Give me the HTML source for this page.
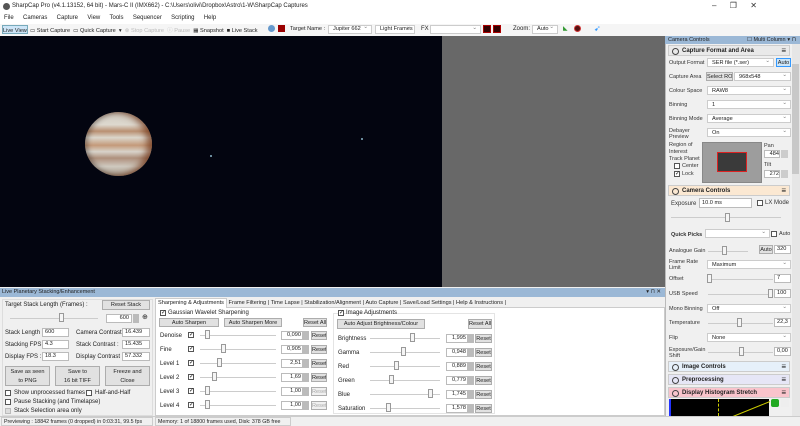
<!DOCTYPE html>
<html><head><meta charset="utf-8"><style>
*{box-sizing:border-box;margin:0;padding:0}
body{width:800px;height:426px;overflow:hidden;position:relative;background:#f0f0f0;font-family:"Liberation Sans",sans-serif;font-size:6px;color:#222}
.a{position:absolute;white-space:nowrap}
.btn{position:absolute;background:#e1e1e1;border:1px solid #adadad;text-align:center;font-size:5.6px;line-height:8px;white-space:nowrap;overflow:hidden}
.inp{position:absolute;background:#fff;border:1px solid #bbb;font-size:5.6px;line-height:7px;padding-left:2px;white-space:nowrap;overflow:hidden}
.dd{position:absolute;background:#fff;border:1px solid #ccc;font-size:5.6px;line-height:8px;padding-left:4px;white-space:nowrap;overflow:hidden}
.dd:after{content:"⌄";position:absolute;right:3px;top:-2px;color:#777}
.cb{position:absolute;width:6px;height:6px;border:1px solid #555;background:#fff;font-size:6px;line-height:5px;text-align:center}
.trk{position:absolute;height:1px;background:#ccc}
.th{position:absolute;width:5px;height:9px;background:#f5f5f5;border:1px solid #999}
.hd{position:absolute;left:668px;width:122px;height:11px;border:1px solid #ccc;font-weight:bold;font-size:6px;line-height:10px;padding-left:13px}
.hd:before{content:"";position:absolute;left:3px;top:2px;width:5px;height:5px;border:1px solid #444;border-radius:50%}
.hd:after{content:"≡";position:absolute;right:3px;top:0;font-size:8px;font-weight:normal}
.lbl{position:absolute;left:669px;font-size:5.5px;color:#333;white-space:nowrap}
</style></head><body>
<div class="a" style="left:0;top:0;width:800px;height:13px;background:#fff"></div>
<div class="a" style="left:3px;top:3px;width:7px;height:7px;border-radius:50%;background:#555"></div>
<div class="a" style="left:12px;top:3px;font-size:6px">SharpCap Pro (v4.1.13152, 64 bit) - Mars-C II (IMX662) - C:\Users\olivi\Dropbox\Astro\1-W\SharpCap Captures</div>
<div class="a" style="left:712px;top:1px;font-size:8px;color:#333">–&nbsp;&nbsp;&nbsp;&nbsp;&nbsp;&nbsp;❐&nbsp;&nbsp;&nbsp;&nbsp;&nbsp;&nbsp;✕</div>
<div class="a" style="left:0;top:13px;width:800px;height:11px;background:#fff"></div>
<div class="a" style="left:4px;top:15px;word-spacing:3px">File&nbsp; Cameras&nbsp; Capture&nbsp; View&nbsp; Tools&nbsp; Sequencer&nbsp; Scripting&nbsp; Help</div>
<div class="a" style="left:0;top:24px;width:800px;height:12px;background:#f5f5f5"></div>
<div class="a" style="left:2px;top:25px;width:26px;height:9px;background:#cde5f7;border:1px solid #7ab"></div>
<div class="a" style="left:3px;top:26px;font-size:5.6px">Live View&nbsp; ▭ Start Capture&nbsp; ▭ Quick Capture&nbsp; ▾&nbsp; <span style="color:#bbb">⊗ Stop Capture&nbsp; ⓘ Pause</span>&nbsp; ▦ Snapshot&nbsp; ■ Live Stack</div>
<div class="a" style="left:268px;top:25px;width:7px;height:7px;background:#69c;border-radius:50%"></div>
<div class="a" style="left:278px;top:25px;width:7px;height:7px;background:#900"></div>
<div class="a" style="left:290px;top:26px;font-size:5.6px">Target Name :</div>
<div class="dd" style="left:328px;top:25px;width:44px;height:9px;line-height:7px">Jupiter 662</div>
<div class="dd" style="left:375px;top:25px;width:40px;height:9px;line-height:7px">Light Frames</div>
<div class="a" style="left:421px;top:26px">FX</div>
<div class="dd" style="left:430px;top:25px;width:51px;height:9px"></div>
<div class="a" style="left:483px;top:25px;width:8px;height:8px;background:#300;border:1px solid #a00"></div>
<div class="a" style="left:493px;top:25px;width:8px;height:8px;background:#300;border:1px solid #a00"></div>
<div class="a" style="left:513px;top:26px">Zoom:</div>
<div class="dd" style="left:532px;top:25px;width:26px;height:9px;line-height:7px">Auto</div>
<div class="a" style="left:563px;top:25px;color:#393">◣</div>
<div class="a" style="left:574px;top:25px;width:7px;height:7px;border-radius:50%;background:#511;border:1px solid #c33"></div>
<div class="a" style="left:594px;top:24px;color:#39f;font-size:8px">➹</div>
<div class="a" style="left:0;top:36px;width:442px;height:251px;background:#030510"></div>
<div class="a" style="left:442px;top:36px;width:223px;height:251px;background:#686868"></div>
<div class="a" style="left:85px;top:112px;width:67px;height:64px;border-radius:50%;background:linear-gradient(180deg,#cfcac0 0%,#ddd8ce 20%,#b99072 30%,#dbd6cc 40%,#c49a7a 52%,#d8d3ca 62%,#ae907c 72%,#cfc9bf 85%,#a89c8c 100%);box-shadow:inset -5px 0 7px rgba(110,50,20,.7),inset 3px 0 5px rgba(0,0,0,.3)"></div>
<div class="a" style="left:210px;top:155px;width:2px;height:2px;background:#6a8a9b"></div>
<div class="a" style="left:361px;top:138px;width:2px;height:2px;background:#6a8a9b"></div>
<div class="a" style="left:665px;top:36px;width:135px;height:380px;background:#f0f0f0;border-left:1px solid #bbb"></div>
<div class="a" style="left:665px;top:36px;width:135px;height:8px;background:#9bb8d6;font-size:5.5px;line-height:8px;padding-left:3px">Camera Controls<span style="position:absolute;left:82px">☐ Multi Column</span><span style="position:absolute;right:4px">▾ ⊓</span></div>
<div class="a" style="left:792px;top:44px;width:8px;height:372px;background:#e6e6e6"></div>
<div class="a" style="left:792px;top:64px;width:7px;height:110px;background:#c8c8c8"></div>
<div class="hd" style="top:45px;background:#e9e9e9">Capture Format and Area</div>
<div class="lbl" style="top:60px">Output Format</div><div class="dd" style="left:707px;top:58px;width:67px;height:9px">SER file (*.ser)</div><div class="btn" style="left:776px;top:58px;width:15px;height:9px;background:#cde5f7;border-color:#39f">Auto</div>
<div class="lbl" style="top:74px">Capture Area</div><div class="btn" style="left:706px;top:72px;width:27px;height:9px">Select ROI</div><div class="dd" style="left:734px;top:72px;width:57px;height:9px">968x548</div>
<div class="lbl" style="top:88px">Colour Space</div><div class="dd" style="left:707px;top:86px;width:84px;height:9px">RAW8</div>
<div class="lbl" style="top:102px">Binning</div><div class="dd" style="left:707px;top:100px;width:84px;height:9px">1</div>
<div class="lbl" style="top:116px">Binning Mode</div><div class="dd" style="left:707px;top:114px;width:84px;height:9px">Average</div>
<div class="lbl" style="top:128px;line-height:6px">Debayer<br>Preview</div><div class="dd" style="left:707px;top:128px;width:84px;height:9px">On</div>
<div class="lbl" style="top:142px;line-height:7px;font-size:5.5px">Region of<br>Interest<br>Track Planet</div>
<div class="cb" style="left:674px;top:163px"></div><div class="lbl" style="left:682px;top:163px">Center</div>
<div class="cb" style="left:674px;top:171px">✓</div><div class="lbl" style="left:682px;top:171px">Lock</div>
<div class="a" style="left:702px;top:142px;width:60px;height:41px;background:#9d9d9d;border:1px solid #888"></div>
<div class="a" style="left:717px;top:152px;width:30px;height:20px;background:#3a3a3a;border:1px solid #d22"></div>
<div class="lbl" style="left:764px;top:143px">Pan</div><div class="inp" style="left:764px;top:150px;width:16px;height:8px;text-align:right">484</div><div class="a" style="left:781px;top:150px;width:7px;height:8px;background:#ccc"></div>
<div class="lbl" style="left:764px;top:162px">Tilt</div><div class="inp" style="left:764px;top:170px;width:16px;height:8px;text-align:right">272</div><div class="a" style="left:781px;top:170px;width:7px;height:8px;background:#ccc"></div>
<div class="hd" style="top:185px;background:#fbe8d2">Camera Controls</div>
<div class="lbl" style="left:671px;top:201px;font-size:6px">Exposure</div><div class="inp" style="left:699px;top:198px;width:53px;height:10px;line-height:8px">10.0 ms</div>
<div class="cb" style="left:757px;top:200px"></div><div class="lbl" style="left:765px;top:200px;font-size:6px">LX Mode</div>
<div class="trk" style="left:671px;top:217px;width:110px"></div><div class="th" style="left:725px;top:213px"></div>
<div class="lbl" style="left:671px;top:232px;font-weight:bold">Quick Picks</div><div class="dd" style="left:705px;top:229px;width:65px;height:9px"></div><div class="cb" style="left:771px;top:231px"></div><div class="lbl" style="left:779px;top:231px">Auto</div>
<div class="lbl" style="top:248px">Analogue Gain</div><div class="trk" style="left:708px;top:251px;width:40px"></div><div class="th" style="left:722px;top:246px"></div><div class="btn" style="left:759px;top:245px;width:14px;height:9px">Auto</div><div class="inp" style="left:774px;top:245px;width:17px;height:9px">320</div>
<div class="lbl" style="top:259px;line-height:6px">Frame Rate<br>Limit</div><div class="dd" style="left:707px;top:260px;width:84px;height:9px">Maximum</div>
<div class="lbl" style="top:276px">Offset</div><div class="trk" style="left:708px;top:279px;width:65px"></div><div class="th" style="left:707px;top:274px"></div><div class="inp" style="left:774px;top:274px;width:17px;height:9px">7</div>
<div class="lbl" style="top:291px">USB Speed</div><div class="trk" style="left:708px;top:294px;width:65px"></div><div class="th" style="left:768px;top:289px"></div><div class="inp" style="left:774px;top:289px;width:17px;height:9px">100</div>
<div class="lbl" style="top:306px">Mono Binning</div><div class="dd" style="left:707px;top:304px;width:84px;height:9px">Off</div>
<div class="lbl" style="top:320px">Temperature</div><div class="trk" style="left:708px;top:323px;width:65px"></div><div class="th" style="left:737px;top:318px"></div><div class="inp" style="left:774px;top:318px;width:17px;height:9px">22,3</div>
<div class="lbl" style="top:335px">Flip</div><div class="dd" style="left:707px;top:333px;width:84px;height:9px">None</div>
<div class="lbl" style="top:347px;line-height:6px">Exposure/Gain<br>Shift</div><div class="trk" style="left:708px;top:352px;width:65px"></div><div class="th" style="left:739px;top:347px"></div><div class="inp" style="left:774px;top:347px;width:17px;height:9px">0,00</div>
<div class="hd" style="top:361px;background:#e6f0fa">Image Controls</div>
<div class="hd" style="top:374px;background:#e6e6f6">Preprocessing</div>
<div class="hd" style="top:387px;background:#f9c4cc">Display Histogram Stretch</div>
<div class="a" style="left:669px;top:399px;width:100px;height:17px;background:#000;border-left:2px solid #23f"></div>
<div class="a" style="left:718px;top:399px;width:0;height:17px;border-left:1px dashed #cc0"></div>
<div class="a" style="left:730px;top:401px;width:40px;height:1px;background:#cc0;transform:rotate(-22deg);transform-origin:right;"></div>
<div class="a" style="left:771px;top:399px;width:8px;height:8px;background:#2a2;border-radius:2px"></div>
<div class="a" style="left:781px;top:399px;width:8px;height:8px;background:#eee"></div>
<div class="a" style="left:0;top:288px;width:665px;height:9px;background:#9bb8d6;font-size:5.5px;line-height:9px;padding-left:2px">Live Planetary Stacking/Enhancement<span style="position:absolute;right:4px">▾ ⊓ ✕</span></div>
<div class="a" style="left:0;top:297px;width:665px;height:119px;background:#f0f0f0"></div>
<div class="a" style="left:2px;top:299px;width:151px;height:117px;border:1px solid #ddd"></div>
<div class="a" style="left:5px;top:302px">Target Stack Length (Frames) :</div>
<div class="btn" style="left:102px;top:300px;width:48px;height:10px">Reset Stack</div>
<div class="trk" style="left:10px;top:318px;width:88px"></div><div class="th" style="left:59px;top:313px"></div>
<div class="inp" style="left:106px;top:314px;width:26px;height:9px;text-align:right;padding-right:2px">600</div><div class="a" style="left:133px;top:314px;width:6px;height:9px;background:#bbb"></div><div class="a" style="left:142px;top:313px;font-size:7px">⊕</div>
<div class="a" style="left:5px;top:330px">Stack Length :</div><div class="inp" style="left:42px;top:328px;width:27px;height:9px">600</div>
<div class="a" style="left:76px;top:330px">Camera Contrast :</div><div class="inp" style="left:122px;top:328px;width:28px;height:9px">16.439</div>
<div class="a" style="left:5px;top:342px">Stacking FPS :</div><div class="inp" style="left:42px;top:340px;width:27px;height:9px">4.3</div>
<div class="a" style="left:76px;top:342px">Stack Contrast :</div><div class="inp" style="left:122px;top:340px;width:28px;height:9px">15.435</div>
<div class="a" style="left:5px;top:354px">Display FPS :</div><div class="inp" style="left:42px;top:352px;width:27px;height:9px">18.3</div>
<div class="a" style="left:76px;top:354px">Display Contrast :</div><div class="inp" style="left:122px;top:352px;width:28px;height:9px">57.332</div>
<div class="btn" style="left:5px;top:366px;width:45px;height:20px;line-height:9px;padding-top:1px">Save as seen<br>to PNG</div>
<div class="btn" style="left:55px;top:366px;width:45px;height:20px;line-height:9px;padding-top:1px">Save to<br>16 bit TIFF</div>
<div class="btn" style="left:105px;top:366px;width:45px;height:20px;line-height:9px;padding-top:1px">Freeze and<br>Close</div>
<div class="cb" style="left:5px;top:390px"></div><div class="a" style="left:14px;top:390px">Show unprocessed frames</div><div class="cb" style="left:86px;top:390px"></div><div class="a" style="left:95px;top:390px">Half-and-Half</div>
<div class="cb" style="left:5px;top:399px"></div><div class="a" style="left:14px;top:399px">Pause Stacking (and Timelapse)</div>
<div class="cb" style="left:5px;top:408px;background:#ddd;border-color:#bbb"></div><div class="a" style="left:14px;top:408px">Stack Selection area only</div>
<div class="a" style="left:155px;top:307px;width:510px;height:109px;background:#fff;border:1px solid #ccc"></div>
<div class="a" style="left:155px;top:298px;width:72px;height:10px;background:#fff;border:1px solid #ccc;border-bottom:none;padding-left:2px;line-height:9px;font-size:5.6px">Sharpening &amp; Adjustments</div>
<div class="a" style="left:227px;top:299px;height:8px;line-height:8px;font-size:5.6px">&nbsp;Frame Filtering&nbsp;|&nbsp;Time Lapse&nbsp;|&nbsp;Stabilization/Alignment&nbsp;|&nbsp;Auto Capture&nbsp;|&nbsp;Save/Load Settings&nbsp;|&nbsp;Help &amp; Instructions&nbsp;|</div>
<div class="cb" style="left:160px;top:310px">✓</div><div class="a" style="left:168px;top:310px">Gaussian Wavelet Sharpening</div>
<div class="btn" style="left:159px;top:318px;width:60px;height:9px">Auto Sharpen</div>
<div class="btn" style="left:224px;top:318px;width:58px;height:9px">Auto Sharpen More</div>
<div class="btn" style="left:303px;top:318px;width:24px;height:9px">Reset All</div>
<div class="a" style="left:160px;top:333px">Denoise</div><div class="a" style="left:160px;top:347px">Fine</div><div class="a" style="left:160px;top:361px">Level 1</div><div class="a" style="left:160px;top:375px">Level 2</div><div class="a" style="left:160px;top:389px">Level 3</div><div class="a" style="left:160px;top:403px">Level 4</div>
<div class="cb" style="left:188px;top:332px">✓</div><div class="cb" style="left:188px;top:346px">✓</div><div class="cb" style="left:188px;top:360px">✓</div><div class="cb" style="left:188px;top:374px">✓</div><div class="cb" style="left:188px;top:388px">✓</div><div class="cb" style="left:188px;top:402px">✓</div>
<div class="trk" style="left:200px;top:335px;width:76px"></div><div class="th" style="left:205px;top:330px"></div>
<div class="trk" style="left:200px;top:349px;width:76px"></div><div class="th" style="left:221px;top:344px"></div>
<div class="trk" style="left:200px;top:363px;width:76px"></div><div class="th" style="left:217px;top:358px"></div>
<div class="trk" style="left:200px;top:377px;width:76px"></div><div class="th" style="left:212px;top:372px"></div>
<div class="trk" style="left:200px;top:391px;width:76px"></div><div class="th" style="left:205px;top:386px"></div>
<div class="trk" style="left:200px;top:405px;width:76px"></div><div class="th" style="left:205px;top:400px"></div>
<div class="inp" style="left:281px;top:331px;width:22px;height:9px;text-align:right;padding-right:1px">0,090</div><div class="btn" style="left:311px;top:331px;width:16px;height:9px">Reset</div>
<div class="inp" style="left:281px;top:345px;width:22px;height:9px;text-align:right;padding-right:1px">0,905</div><div class="btn" style="left:311px;top:345px;width:16px;height:9px">Reset</div>
<div class="inp" style="left:281px;top:359px;width:22px;height:9px;text-align:right;padding-right:1px">2,51</div><div class="btn" style="left:311px;top:359px;width:16px;height:9px">Reset</div>
<div class="inp" style="left:281px;top:373px;width:22px;height:9px;text-align:right;padding-right:1px">1,69</div><div class="btn" style="left:311px;top:373px;width:16px;height:9px">Reset</div>
<div class="inp" style="left:281px;top:387px;width:22px;height:9px;text-align:right;padding-right:1px">1,00</div><div class="btn" style="left:311px;top:387px;width:16px;height:9px;color:#aaa;background:#f0f0f0">Reset</div>
<div class="inp" style="left:281px;top:401px;width:22px;height:9px;text-align:right;padding-right:1px">1,00</div><div class="btn" style="left:311px;top:401px;width:16px;height:9px;color:#aaa;background:#f0f0f0">Reset</div>
<div class="a" style="left:303px;top:331px;width:6px;height:9px;background:#bbb"></div><div class="a" style="left:303px;top:345px;width:6px;height:9px;background:#bbb"></div><div class="a" style="left:303px;top:359px;width:6px;height:9px;background:#bbb"></div><div class="a" style="left:303px;top:373px;width:6px;height:9px;background:#bbb"></div><div class="a" style="left:303px;top:387px;width:6px;height:9px;background:#bbb"></div><div class="a" style="left:303px;top:401px;width:6px;height:9px;background:#bbb"></div>
<div class="a" style="left:333px;top:313px;width:162px;height:101px;border:1px solid #e4e4e4"></div>
<div class="cb" style="left:338px;top:310px">✓</div><div class="a" style="left:346px;top:310px">Image Adjustments</div>
<div class="btn" style="left:337px;top:319px;width:88px;height:10px">Auto Adjust Brightness/Colour</div>
<div class="btn" style="left:468px;top:319px;width:24px;height:10px">Reset All</div>
<div class="a" style="left:338px;top:336px">Brightness</div><div class="a" style="left:338px;top:350px">Gamma</div><div class="a" style="left:338px;top:364px">Red</div><div class="a" style="left:338px;top:378px">Green</div><div class="a" style="left:338px;top:392px">Blue</div><div class="a" style="left:338px;top:406px">Saturation</div>
<div class="trk" style="left:370px;top:338px;width:70px"></div><div class="th" style="left:410px;top:333px"></div>
<div class="trk" style="left:370px;top:352px;width:70px"></div><div class="th" style="left:401px;top:347px"></div>
<div class="trk" style="left:370px;top:366px;width:70px"></div><div class="th" style="left:394px;top:361px"></div>
<div class="trk" style="left:370px;top:380px;width:70px"></div><div class="th" style="left:389px;top:375px"></div>
<div class="trk" style="left:370px;top:394px;width:70px"></div><div class="th" style="left:428px;top:389px"></div>
<div class="trk" style="left:370px;top:408px;width:70px"></div><div class="th" style="left:386px;top:403px"></div>
<div class="inp" style="left:446px;top:334px;width:22px;height:9px;text-align:right;padding-right:1px">1,995</div><div class="btn" style="left:475px;top:334px;width:17px;height:9px">Reset</div>
<div class="inp" style="left:446px;top:348px;width:22px;height:9px;text-align:right;padding-right:1px">0,948</div><div class="btn" style="left:475px;top:348px;width:17px;height:9px">Reset</div>
<div class="inp" style="left:446px;top:362px;width:22px;height:9px;text-align:right;padding-right:1px">0,889</div><div class="btn" style="left:475px;top:362px;width:17px;height:9px">Reset</div>
<div class="inp" style="left:446px;top:376px;width:22px;height:9px;text-align:right;padding-right:1px">0,779</div><div class="btn" style="left:475px;top:376px;width:17px;height:9px">Reset</div>
<div class="inp" style="left:446px;top:390px;width:22px;height:9px;text-align:right;padding-right:1px">1,745</div><div class="btn" style="left:475px;top:390px;width:17px;height:9px">Reset</div>
<div class="inp" style="left:446px;top:404px;width:22px;height:9px;text-align:right;padding-right:1px">1,578</div><div class="btn" style="left:475px;top:404px;width:17px;height:9px">Reset</div>
<div class="a" style="left:468px;top:334px;width:6px;height:9px;background:#bbb"></div><div class="a" style="left:468px;top:348px;width:6px;height:9px;background:#bbb"></div><div class="a" style="left:468px;top:362px;width:6px;height:9px;background:#bbb"></div><div class="a" style="left:468px;top:376px;width:6px;height:9px;background:#bbb"></div><div class="a" style="left:468px;top:390px;width:6px;height:9px;background:#bbb"></div><div class="a" style="left:468px;top:404px;width:6px;height:9px;background:#bbb"></div>
<div class="a" style="left:0;top:416px;width:800px;height:10px;background:#f0f0f0;border-top:1px solid #ccc"></div>
<div class="a" style="left:1px;top:417px;width:152px;height:9px;border:1px solid #ccc;padding-left:2px;line-height:8px;font-size:5.3px;overflow:hidden">Previewing : 18842 frames (0 dropped) in 0:03:31, 99.5 fps</div>
<div class="a" style="left:155px;top:417px;width:136px;height:9px;border:1px solid #ccc;padding-left:2px;line-height:8px;font-size:5.3px;overflow:hidden">Memory: 1 of 18800 frames used, Disk: 378 GB free</div>
</body></html>
